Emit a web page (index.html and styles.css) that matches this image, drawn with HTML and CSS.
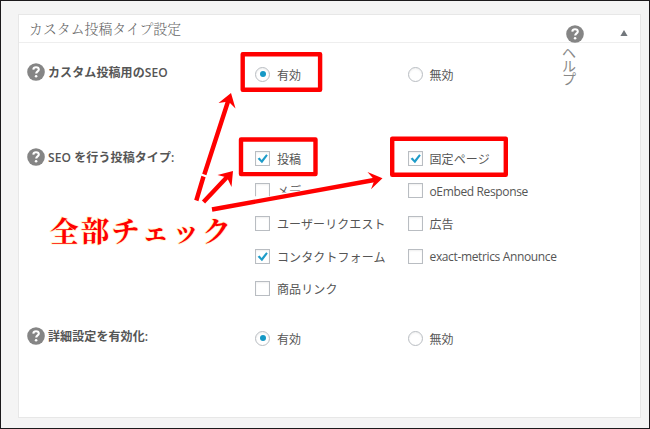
FILE: index.html
```html
<!DOCTYPE html>
<html lang="ja">
<head>
<meta charset="utf-8">
<title>カスタム投稿タイプ設定</title>
<link rel="stylesheet" href="styles.css">
</head>
<body>
<svg width="0" height="0" class="defs">
  <symbol id="help" viewBox="0 0 18 18">
    <circle cx="9" cy="9" r="8.8" fill="#858585"/>
    <path d="M6.3 6.6C6.5 4.9 7.5 4.2 9 4.2c1.7 0 2.8.9 2.8 2.3 0 1.9-2.6 1.9-2.6 4" fill="none" stroke="#fff" stroke-width="2.1"/>
    <circle cx="9.1" cy="13.2" r="1.3" fill="#fff"/>
  </symbol>
  <symbol id="tick" viewBox="0 0 15 15">
    <path d="M2.6 7.8L4.6 6.6L6.6 9L11.2 3.2L12.8 4.6L7 12.2Z" fill="#1e9cc9"/>
  </symbol>
</svg>
<main class="panel">
  <header class="head">
    <h2 class="title">カスタム投稿タイプ設定</h2>
    <svg class="toggle" viewBox="0 0 8 6"><path d="M4 0L7.6 6H.4Z"/></svg>
    <div class="assist"><svg class="icon"><use href="#help"/></svg><span class="assist-text">ヘルプ</span></div>
  </header>

  <section class="setting seo">
    <div class="label"><svg class="icon"><use href="#help"/></svg><span>カスタム投稿用のSEO</span></div>
    <div class="options">
      <div class="option"><i class="radio on"></i><span>有効</span></div>
      <div class="option"><i class="radio"></i><span>無効</span></div>
    </div>
  </section>

  <section class="setting types">
    <div class="label"><svg class="icon"><use href="#help"/></svg><span>SEO を行う投稿タイプ:</span></div>
    <div class="options">
      <div class="option"><i class="check"><svg><use href="#tick"/></svg></i><span>投稿</span></div>
      <div class="option"><i class="check"><svg><use href="#tick"/></svg></i><span>固定ページ</span></div>
      <div class="option"><i class="check"></i><span>メディア</span></div>
      <div class="option latin"><i class="check"></i><span>oEmbed Response</span></div>
      <div class="option"><i class="check"></i><span>ユーザーリクエスト</span></div>
      <div class="option"><i class="check"></i><span>広告</span></div>
      <div class="option"><i class="check"><svg><use href="#tick"/></svg></i><span>コンタクトフォーム</span></div>
      <div class="option latin"><i class="check"></i><span>exact-metrics Announce</span></div>
      <div class="option"><i class="check"></i><span>商品リンク</span></div>
    </div>
  </section>

  <section class="setting detail">
    <div class="label"><svg class="icon"><use href="#help"/></svg><span>詳細設定を有効化:</span></div>
    <div class="options">
      <div class="option"><i class="radio on"></i><span>有効</span></div>
      <div class="option"><i class="radio"></i><span>無効</span></div>
    </div>
  </section>
</main>

<svg class="marks" viewBox="0 0 650 429">
  <path d="M250 196.3H272V200H250ZM274 192.5H289V190.5H312V195H326V200H274ZM303 182H326V195H303Z" fill="#fff"/>
  <g fill="none" stroke="#f00" stroke-width="4.4" stroke-linejoin="round">
    <rect x="242.7" y="54.2" width="77.4" height="35.6"/>
    <rect x="241" y="139.5" width="74.5" height="34.6"/>
    <rect x="392.2" y="138.7" width="113.6" height="36"/>
  </g>
  <g stroke="#f00" stroke-width="4.4">
    <path d="M196.3 200.5L203.5 176.5M204.3 174.5L228.8 99"/>
    <path d="M203.5 202L228 176"/>
    <path d="M212 209.5L377 179.5"/>
  </g>
  <g fill="#f00">
    <path d="M231 93L235.5 108.5L228.5 101.5L218.5 103Z"/>
    <path d="M233 171L231.5 187L227 177.5L217.5 175Z"/>
    <path d="M382.5 178.3L371 189.2L374.5 180L367.5 172Z"/>
  </g>
  <text class="callout" x="50" y="242" textLength="181">全部チェック</text>
</svg>
</body>
</html>
```

FILE: styles.css
```css
* { box-sizing: border-box; }
body {
  margin: 0;
  width: 650px;
  height: 429px;
  padding: 13px 8px 10px 17px;
  border: 1px solid #1b191b;
  background: #f4f4f4;
  position: relative;
  overflow: hidden;
  color: #555;
  font: 12px/16px "Open Sans", "Noto Sans CJK JP", sans-serif;
}
.defs { position: absolute; }
.panel {
  height: 404px;
  background: #fff;
  border: 1px solid #e7e7e7;
}
.head {
  position: relative;
  display: flex;
  align-items: center;
  justify-content: space-between;
  height: 28px;
  padding: 0 12px 0 10px;
  border-bottom: 1px solid #eee;
}
.title {
  margin: -2px 0 0;
  color: #666;
  font: 300 13.9px/20px "Noto Serif CJK JP", "Noto Sans CJK JP", serif;
}
.toggle { width: 8px; height: 6px; margin-top: 8px; fill: #72777c; }
.assist {
  position: absolute;
  left: 543px;
  top: 10px;
  width: 26px;
}
.assist .icon { display: block; margin-left: 4px; }
.assist-text {
  display: block;
  width: 14px;
  margin-top: 3px;
  color: #888;
  font-size: 14px;
  line-height: 13px;
  word-break: break-all;
}
.icon { width: 18px; height: 18px; flex: none; }
.setting {
  display: grid;
  grid-template-columns: 228px 1fr;
  padding-left: 8px;
  align-items: start;
}
.seo { padding-top: 15px; height: 85px; }
.types { padding-top: 14px; height: 179px; }
.detail { padding-top: 15px; }
.label {
  display: flex;
  align-items: center;
  gap: 3px;
  height: 32px;
  margin-top: -2px;
  font-weight: 600;
  letter-spacing: .1px;
}
.types .label { margin-top: -1px; }
.label span { padding-top: 2px; }
.options {
  display: grid;
  grid-template-columns: 152.5px 150px;
  grid-auto-rows: 32.6px;
}
.option {
  display: flex;
  align-items: center;
  gap: 7px;
  white-space: nowrap;
  letter-spacing: .1px;
}
.option span { padding-top: 3px; }
.latin { letter-spacing: -.36px; }
.latin span { padding-top: 2px; }
.check, .radio {
  width: 15px;
  height: 15px;
  flex: none;
  border: 1px solid #b9bdc2;
  background: #fff;
  box-shadow: inset 0 1px 2px #0001;
}
.check svg { display: block; width: 15px; height: 15px; margin: -1px; }
.radio { border-radius: 50%; display: grid; place-items: center; }
.on::before {
  content: "";
  width: 6px;
  height: 6px;
  border-radius: 50%;
  background: #1598c5;
}
.marks {
  position: absolute;
  left: -1px;
  top: -1px;
  width: 650px;
  height: 429px;
}
.callout {
  font: 700 28.5px "Noto Serif CJK JP", "Noto Sans CJK JP", serif;
  fill: #f00;
  stroke: #fff6c8;
  stroke-width: 1.6px;
  paint-order: stroke;
}
```
